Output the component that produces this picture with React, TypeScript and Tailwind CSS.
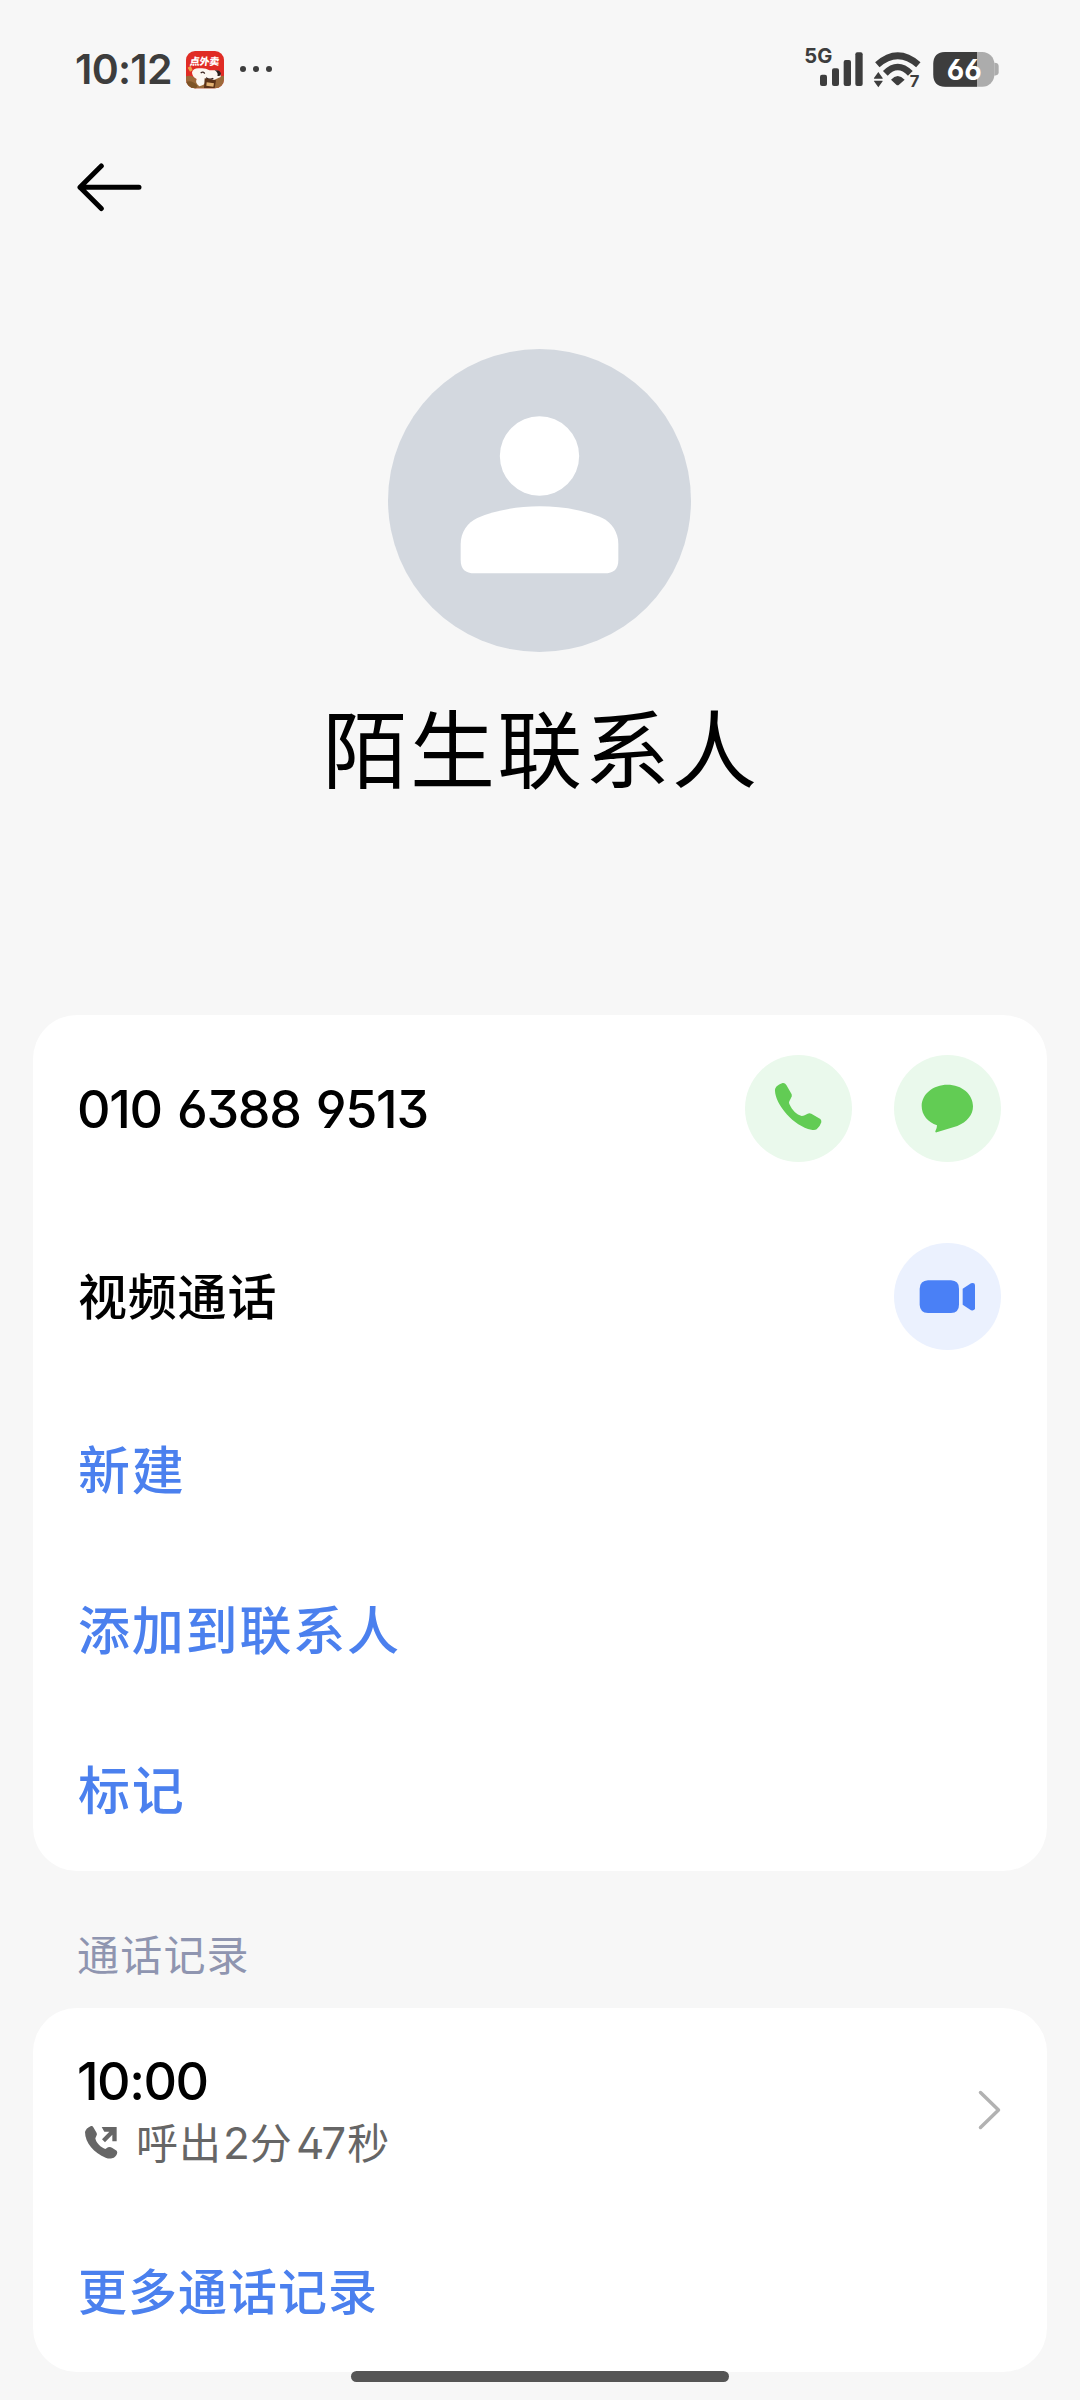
import React from "react";

const cjk = "font-['Noto_Sans_CJK_SC',sans-serif]";
const latin = "font-['Inter',sans-serif] [font-feature-settings:'ss01','cv03','cv04','cv09']";

function StatusBar() {
  return (
    <header className="flex h-[120px] items-start justify-between pl-[75px] pr-[81px] text-[#3d3d3d]">
      <div className="flex pt-[49px]">
        <span className={`${latin} w-[111px] whitespace-nowrap text-[41px] font-semibold leading-[41px] tracking-[-0.7px]`}>10:12</span>
        <AppBadge />
        <div className="ml-[16px] flex gap-[7px] pt-[17px]">
          <i className="size-[6px] rounded-full bg-[#3d3d3d]" />
          <i className="size-[6px] rounded-full bg-[#3d3d3d]" />
          <i className="size-[6px] rounded-full bg-[#3d3d3d]" />
        </div>
      </div>
      <div className={`flex pt-[46px] ${latin}`}>
        <svg className="h-[42px] w-[61px] overflow-visible" viewBox="72 48 183 126" fill="#3d3d3d">
          <text x="73" y="99" fontWeight="700" fontSize="62" textLength="84" lengthAdjust="spacingAndGlyphs">5G</text>
          <rect x="120" y="134" width="21" height="34" rx="6" />
          <rect x="156" y="115" width="21" height="53" rx="6" />
          <rect x="191" y="90" width="22" height="78" rx="6" />
          <rect x="226" y="67" width="22" height="101" rx="6" />
        </svg>
        <svg className="ml-[7px] h-[42px] w-[50px] overflow-visible" viewBox="276 48 150 126">
          <g fill="none" stroke="#3d3d3d">
            <path d="M292 104Q353 50 415 104" strokeWidth="20" />
            <path d="M316 130Q353 92 391 130" strokeWidth="20" />
          </g>
          <g fill="#3d3d3d">
            <path d="M333 149Q353 127 374 149L357 164Q353 168 349 164Z" />
            <path d="M295 126L308 144Q309 146 307 146H283Q281 146 282 144ZM295 172L308 154Q309 152 307 152H283Q281 152 282 154Z" />
            <text x="389" y="170" fontWeight="700" fontSize="49" textLength="29" lengthAdjust="spacingAndGlyphs">7</text>
          </g>
        </svg>
        <svg className="ml-[10px] h-[42px] w-[67px] overflow-visible" viewBox="456 48 201 126">
          <path d="M643 98Q656 98 656 108V127Q656 137 643 137Z" fill="#acacac" />
          <rect x="460" y="66" width="183" height="104" rx="36" fill="#acacac" />
          <path d="M591 66H496Q460 66 460 102V134Q460 170 496 170H591Z" fill="#3d3d3d" />
          <text x="500" y="150" fontWeight="700" fontSize="87" fill="#fff" textLength="105" lengthAdjust="spacingAndGlyphs">66</text>
        </svg>
      </div>
    </header>
  );
}

function AppBadge() {
  return (
    <svg className="mt-[2px] size-[38px]" viewBox="0 0 114 114">
      <defs>
        <clipPath id="badge"><rect width="114" height="112" rx="27" /></clipPath>
      </defs>
      <g clipPath="url(#badge)">
        <rect width="114" height="114" fill="#e02c25" />
        <path d="M0 76Q20 70 32 86L60 82L114 74V114H0Z" fill="#9c6a3a" />
        <path d="M0 92Q20 86 34 104L30 114H0Z" fill="#7d5426" />
        <path d="M5 50L14 44L20 58L12 62Z" fill="#eda04a" />
        <path d="M18 64Q22 50 42 52Q58 50 70 58L92 58Q106 64 104 78Q84 90 62 88Q56 104 40 106Q26 96 32 84Q18 78 18 64Z" fill="#fbf6f1" />
        <path d="M86 58Q102 56 105 68Q104 78 94 74Q98 66 86 58Z" fill="#2b201e" />
        <path d="M44 66q8-6 12 2M60 80q10 8 22 2" fill="none" stroke="#3a2420" strokeWidth="4" />
        <path d="M56 82L90 88L86 112H54Z" fill="#5b3218" />
        <path d="M62 94L84 97L82 107L61 104Z" fill="#e3b273" />
        <text x="11" y="41" fontFamily="Noto Sans CJK SC" fontWeight="900" fontSize="30" fill="#fff" textLength="88" transform="skewX(-6) translate(4 0)">点外卖</text>
      </g>
    </svg>
  );
}

function Avatar() {
  return (
    <svg className="ml-[388px] block size-[303px]" viewBox="54 57 909 909">
      <circle cx="508.500" cy="511.500" r="454.500" fill="#d3d8df" />
      <circle cx="508.500" cy="378" r="119" fill="#fff" />
      <path
        d="M272 642C272 606 293 578 322 564C373 541 440 529 509 529C578 529 646 541 697 564C724 577 745 606 745 642V690C745 718 731 730 703 730H314C286 730 272 718 272 690Z"
        fill="#fff"
      />
    </svg>
  );
}

function LinkRow({ label, className }: { label: string; className: string }) {
  return (
    <button className={`${cjk} flex w-full items-center pb-[6px] text-left font-medium text-[#4b80ee] ${className}`}>
      <span className="leading-none">{label}</span>
    </button>
  );
}

export default function App() {
  return (
    <main className="relative h-[2400px] w-[1080px] overflow-hidden bg-[#f7f7f7] text-black">
      <StatusBar />
      <nav className="h-[229px] pl-[75px] pt-[42px]">
        <svg className="h-[50px] w-[68px]" viewBox="0 0 68 50" fill="none" stroke="#000" strokeWidth="5" strokeLinecap="round" strokeLinejoin="round">
          <path d="M26.300 4L5 25.200L26.300 46.500M5 25.200H64" />
        </svg>
      </nav>
      <div className="h-[666px]">
        <Avatar />
        <h1 className={`${cjk} mt-[51px] pl-[2px] text-center text-[85px] font-normal leading-[84px] tracking-[2.400px]`}>陌生联系人</h1>
      </div>

      <section className="mx-[33px] h-[856px] rounded-[44px] bg-white pl-[45px] pr-[46px]">
        <div className="flex h-[187px] items-center">
          <span className={`${latin} -ml-px flex-1 whitespace-nowrap pt-[3px] text-[52px] font-medium leading-none tracking-[-1.3px] [word-spacing:2.5px]`}>010 6388 9513</span>
          <button className="size-[107px] rounded-full bg-[#eaf9ec]">
            <svg className="block size-full" viewBox="75 165 321 321">
              <path fill="#62cc54" d="M165 273C164 262 172 255 188 249Q195 248 199 255L215 283Q217 289 213 294L208 304Q206 308 208 312C217 332 230 344 245 348Q250 348 254 346L263 341Q268 338 274 341L301 357Q305 361 304 367Q300 380 290 388Q284 391 274 389C222 380 166 313 165 273Z" />
            </svg>
          </button>
          <button className="ml-[42px] size-[107px] rounded-full bg-[#eaf9ec]">
            <svg className="block size-full" viewBox="522 165 321 321">
              <path fill="#62cc54" d="M605 318C605 282 640 254 682 254C726 254 759 283 759 319C759 345 741 366 712 378L650 397Q645 398 646 394Q651 386 651 376C624 367 605 345 605 318Z" />
            </svg>
          </button>
        </div>
        <div className="flex h-[188px] items-center">
          <span className={`${cjk} flex-1 pb-[5px] text-[49px] font-medium leading-none tracking-[0.8px]`}>视频通话</span>
          <button className="size-[107px] rounded-full bg-[#ebf1fe]">
            <svg className="block size-full" viewBox="522 729 321 321" fill="#4a80f6">
              <path d="M624 841H693Q717 842 717 866V914Q717 938 693 939H624Q600 938 599 914V866Q600 842 624 841Z" />
              <path d="M728 866L753 850Q765 847 765 856V925Q765 933 753 931L728 914Z" />
            </svg>
          </button>
        </div>
        <LinkRow label="新建" className="h-[161px] text-[52px] tracking-[1.8px]" />
        <LinkRow label="添加到联系人" className="h-[160px] text-[52px] tracking-[1.8px]" />
        <LinkRow label="标记" className="h-[160px] text-[52px] tracking-[1.8px]" />
      </section>

      <h2 className={`${cjk} flex h-[137px] items-center pl-[77px] pt-[27px] text-[42px] font-normal leading-none tracking-[1.2px] text-[#8f95b0]`}>通话记录</h2>

      <section className="mx-[33px] h-[364px] rounded-[44px] bg-white pl-[45px] pr-[46px]">
        <div className="flex h-[204px] items-center justify-between">
          <div className="flex flex-col">
            <span className={`${latin} -ml-px text-[52px] font-medium leading-[64px] tracking-[-1.5px]`}>10:00</span>
            <div className="flex h-[56px] items-center text-[#666]">
              <svg className="ml-[6px] h-[36px] w-[36px]" viewBox="252 852 108 108" fill="#666">
                <path d="M255 876Q258 864 273 858Q278 857 280 862L290 879Q292 883 289 888L286 895C288 909 303 923 316 927L324 922Q330 919 336 923L350 932Q353 936 351 941Q348 951 336 955Q327 957 317 953C283 939 255 909 255 876Z" />
                <path d="M305 861H350V904H337V884L315 907L306 898L328 875H313Z" />
              </svg>
              <span className={`${cjk} ml-[16px] whitespace-nowrap text-[42px] leading-none tracking-[1px]`}>
                呼出<span className={`${latin} mx-[1px] text-[44px] font-normal tracking-[-1px]`}>2</span>分<span className={`${latin} ml-[3px] mr-[4px] text-[44px] font-normal tracking-[-3px]`}>47</span>秒
              </span>
            </div>
          </div>
          <svg className="h-[42px] w-[24px]" viewBox="0 0 24 42" fill="none" stroke="#b2b2b2" strokeWidth="3.500" strokeLinecap="round" strokeLinejoin="round">
            <path d="M3.500 3.500L21.500 21L3.500 38.500" />
          </svg>
        </div>
        <LinkRow label="更多通话记录" className="h-[159px] text-[49px] tracking-[1px]" />
      </section>
      <div className="absolute left-[351px] top-[2371px] h-[11px] w-[378px] rounded-full bg-[#555]" />
    </main>
  );
}
